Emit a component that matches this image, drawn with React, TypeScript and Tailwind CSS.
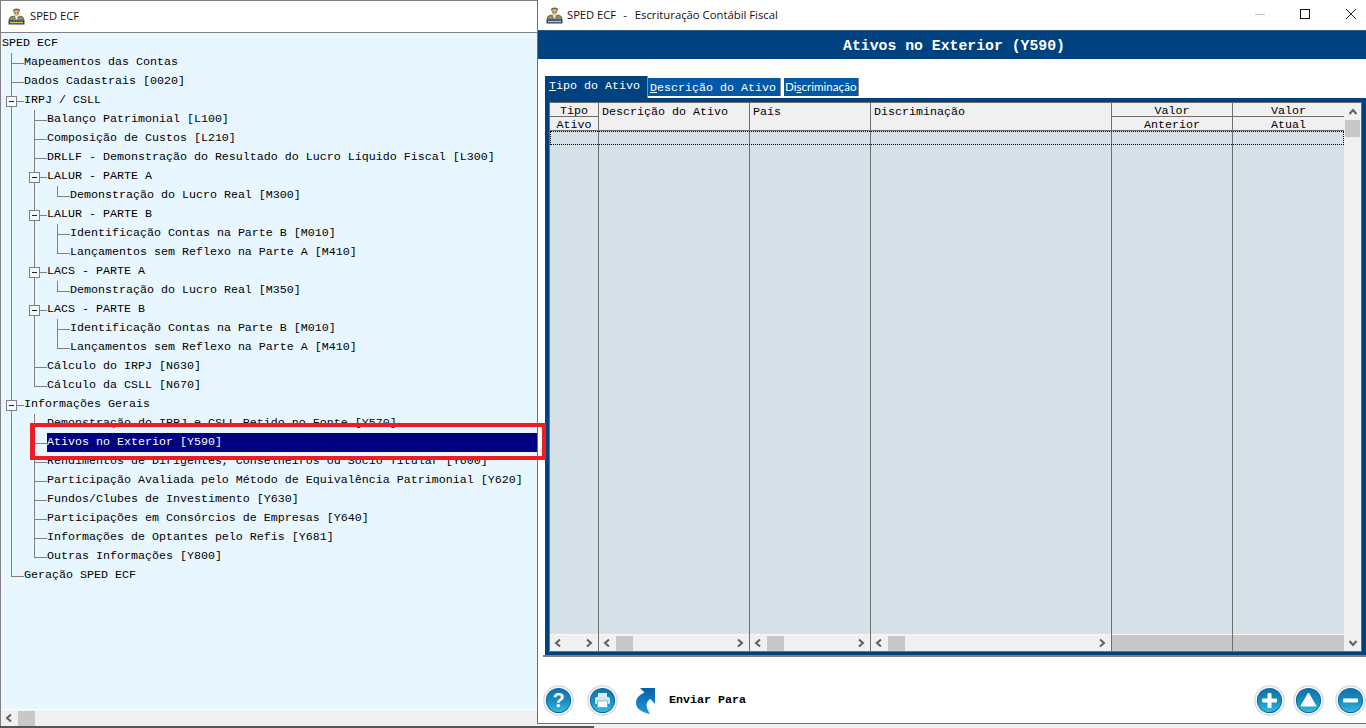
import React from "react";

type Kind = "root" | "tee" | "elbow" | "box";
type Row = { t: string; l: number; k: Kind; sel?: boolean };

const rows: Row[] = [
  { t: "SPED ECF", l: 0, k: "root" },
  { t: "Mapeamentos das Contas", l: 0, k: "tee" },
  { t: "Dados Cadastrais [0020]", l: 0, k: "tee" },
  { t: "IRPJ / CSLL", l: 0, k: "box" },
  { t: "Balanço Patrimonial [L100]", l: 1, k: "tee" },
  { t: "Composição de Custos [L210]", l: 1, k: "tee" },
  { t: "DRLLF - Demonstração do Resultado do Lucro Líquido Fiscal [L300]", l: 1, k: "tee" },
  { t: "LALUR - PARTE A", l: 1, k: "box" },
  { t: "Demonstração do Lucro Real [M300]", l: 2, k: "elbow" },
  { t: "LALUR - PARTE B", l: 1, k: "box" },
  { t: "Identificação Contas na Parte B [M010]", l: 2, k: "tee" },
  { t: "Lançamentos sem Reflexo na Parte A [M410]", l: 2, k: "elbow" },
  { t: "LACS - PARTE A", l: 1, k: "box" },
  { t: "Demonstração do Lucro Real [M350]", l: 2, k: "elbow" },
  { t: "LACS - PARTE B", l: 1, k: "box" },
  { t: "Identificação Contas na Parte B [M010]", l: 2, k: "tee" },
  { t: "Lançamentos sem Reflexo na Parte A [M410]", l: 2, k: "elbow" },
  { t: "Cálculo do IRPJ [N630]", l: 1, k: "tee" },
  { t: "Cálculo da CSLL [N670]", l: 1, k: "elbow" },
  { t: "Informações Gerais", l: 0, k: "box" },
  { t: "Demonstração do IRPJ e CSLL Retido no Fonte [Y570]", l: 1, k: "tee" },
  { t: "Ativos no Exterior [Y590]", l: 1, k: "tee", sel: true },
  { t: "Rendimentos de Dirigentes, Conselheiros ou Sócio Titular [Y600]", l: 1, k: "tee" },
  { t: "Participação Avaliada pelo Método de Equivalência Patrimonial [Y620]", l: 1, k: "tee" },
  { t: "Fundos/Clubes de Investimento [Y630]", l: 1, k: "tee" },
  { t: "Participações em Consórcios de Empresas [Y640]", l: 1, k: "tee" },
  { t: "Informações de Optantes pelo Refis [Y681]", l: 1, k: "tee" },
  { t: "Outras Informações [Y800]", l: 1, k: "elbow" },
  { t: "Geração SPED ECF", l: 0, k: "elbow" },
];

const GUIDE = "#808080";

function Connector({ l, k }: { l: number; k: Kind }) {
  const gx = [10, 33, 56][l];
  const w = gx + 13;
  return (
    <svg width={w} height={19} className="shrink-0 block" shapeRendering="crispEdges">
      {l >= 1 && <rect x={10} y={0} width={1} height={19} fill={GUIDE} />}
      {l >= 2 && <rect x={33} y={0} width={1} height={19} fill={GUIDE} />}
      {k === "tee" && <rect x={gx} y={0} width={1} height={19} fill={GUIDE} />}
      {k === "elbow" && <rect x={gx} y={0} width={1} height={10} fill={GUIDE} />}
      {k === "box" ? (
        <>
          <rect x={gx} y={0} width={1} height={19} fill={GUIDE} />
          <rect x={gx + 5} y={10} width={8} height={1} fill={GUIDE} />
          <rect x={gx - 4.5} y={5.5} width={10} height={10} fill="#f4fbff" stroke={GUIDE} />
          <rect x={gx - 2} y={10} width={5} height={1} fill="#222222" />
        </>
      ) : (
        <rect x={gx} y={10} width={13} height={1} fill={GUIDE} />
      )}
    </svg>
  );
}

function TreeRow({ r }: { r: Row }) {
  if (r.k === "root") {
    return <div className="h-[19px] pl-px flex items-center leading-none">{r.t}</div>;
  }
  return (
    <div className="h-[19px] flex items-center leading-none">
      <Connector l={r.l} k={r.k} />
      {r.sel ? (
        <div className="flex-1 h-[19px] bg-[#000080] text-white flex items-center">{r.t}</div>
      ) : (
        <div className="whitespace-nowrap">{r.t}</div>
      )}
    </div>
  );
}

function AppIcon() {
  return (
    <svg width={17} height={17} viewBox="0 0 17 17" className="shrink-0">
      <ellipse cx={8.5} cy={2.6} rx={3.4} ry={2.2} fill="#6b6a55" />
      <ellipse cx={8.5} cy={5} rx={2.8} ry={2.9} fill="#d3b48a" />
      <rect x={6.5} y={4.5} width={1.2} height={1} fill="#3a3020" />
      <rect x={9.4} y={4.5} width={1.2} height={1} fill="#3a3020" />
      <path d="M1 12 Q1 8.5 5 8 L8.5 9.5 L12 8 Q16 8.5 16 12 L16 13 L1 13 Z" fill="#8d8a6e" stroke="#3c3a2a" strokeWidth={0.6} />
      <path d="M7 8.5 L8.5 12 L10 8.5 Z" fill="#f4f0d8" />
      <rect x={0.5} y={12.5} width={16} height={4} fill="#2b3f8f" />
      <rect x={2} y={13.8} width={13} height={1.4} fill="#e7c62a" />
    </svg>
  );
}

function Chevron({ d }: { d: "l" | "r" | "u" | "d" }) {
  const p = {
    l: "M7 1.5 L3 5 L7 8.5",
    r: "M3 1.5 L7 5 L3 8.5",
    u: "M1.5 7 L5 3 L8.5 7",
    d: "M1.5 3 L5 7 L8.5 3",
  }[d];
  return (
    <svg width={10} height={10} viewBox="0 0 10 10" className="shrink-0 block">
      <path d={p} fill="none" stroke="#606060" strokeWidth={2} />
    </svg>
  );
}

function HScroll({ thumb }: { thumb: boolean }) {
  return (
    <div className="h-[16px] bg-[#f0f0f0] flex items-center pl-[3px] pr-[4px]">
      <Chevron d="l" />
      {thumb && <div className="ml-[4px] w-[17px] h-[15px] bg-[#c8c8c8]" />}
      <div className="flex-1" />
      <Chevron d="r" />
    </div>
  );
}

function Column({
  w,
  top,
  sub,
  scroll,
}: {
  w: string;
  top: string;
  sub?: string;
  scroll: "thumb" | "plain" | "none";
}) {
  return (
    <div className={`${w} flex flex-col border-l border-[#6f6f6f]`}>
      {sub !== undefined ? (
        <>
          <div className="h-[14px] border-b border-[#6f6f6f] bg-[#f0f0f0] flex justify-center pt-[3px] leading-[11px]">
            {top}
          </div>
          <div className="h-[14px] border-b border-[#6f6f6f] bg-[#f0f0f0] flex justify-center pt-[3px] leading-[11px]">
            {sub}
          </div>
        </>
      ) : (
        <div className="h-[28px] border-b border-[#6f6f6f] bg-[#f0f0f0] pl-[3px] pt-[3px] leading-[13px]">{top}</div>
      )}
      <div className="flex-1 bg-[#d6e1e7]" />
      <div className="h-px bg-[#f7f7f7]" />
      {scroll === "none" ? (
        <div className="h-[16px] bg-[#c8c8c8]" />
      ) : (
        <HScroll thumb={scroll === "thumb"} />
      )}
    </div>
  );
}

function Round({ id, children }: { id: string; children: React.ReactNode }) {
  return (
    <svg width={31} height={31} viewBox="0 0 31 31" className="shrink-0 block">
      <defs>
        <linearGradient id={id} x1="0" y1="0" x2="0" y2="1">
          <stop offset="0" stopColor="#1273ac" />
          <stop offset="0.55" stopColor="#1a8fc2" />
          <stop offset="1" stopColor="#36bcdc" />
        </linearGradient>
      </defs>
      <circle cx={15.5} cy={15.5} r={15.3} fill="#d4d8dc" />
      <circle cx={15.5} cy={15.5} r={14} fill="#f6f8f9" />
      <circle cx={15.5} cy={15.5} r={12.6} fill="#0d6a9e" />
      <circle cx={15.5} cy={15.5} r={11.6} fill={`url(#${id})`} />
      {children}
    </svg>
  );
}

export default function App() {
  const mono = "[font-family:'Liberation_Mono','Courier_New',monospace]";
  const sans = "[font-family:'Open_Sans','Noto_Sans',sans-serif]";
  return (
    <div className={`relative w-[1366px] h-[728px] overflow-hidden bg-[#f0f0f0] ${mono} text-[11.67px] text-black`}>
      {/* Left window */}
      <div className="absolute left-0 top-0 w-[538px] h-[728px] flex flex-col border-l border-[#808080]">
        <div className="h-px bg-[#808080] -ml-px" />
        <div className="h-[32px] bg-white flex items-center pl-[7px] border-b border-[#808080]">
          <AppIcon />
          <span className={`ml-[5px] text-[11.2px] text-[#111] ${sans}`}>SPED ECF</span>
        </div>
        <div className="flex-1 bg-[#e8f7ff] overflow-hidden pt-px">
          {rows.map((r, i) => (
            <TreeRow key={i} r={r} />
          ))}
        </div>
        <div className="h-px bg-white" />
        <div className="h-[16px] bg-[#f0f0f0] flex items-center pl-[3px]">
          <Chevron d="l" />
          <div className="ml-[4px] w-[17px] h-[15px] bg-[#c8c8c8]" />
        </div>
        <div className="h-[2px] bg-[#555555] -ml-px" />
      </div>

      {/* Right window */}
      <div className="absolute left-[537px] top-0 w-[829px] h-[724px] bg-white flex flex-col border-l border-b border-[#707070]">
        <div className="h-[30px] shrink-0 flex items-center pl-[8px]">
          <AppIcon />
          <span className={`ml-[4px] text-[11.2px] text-[#111] ${sans}`}>SPED ECF</span>
          <span className={`ml-[7px] text-[11.2px] text-[#111] ${sans}`}>-</span>
          <span className={`ml-[8px] text-[11.3px] text-[#111] ${sans}`}>Escrituração Contábil Fiscal</span>
          <div className="flex-1" />
          <svg width={112} height={30} viewBox="0 0 112 30" className="shrink-0" shapeRendering="crispEdges">
            <rect x={1} y={14} width={10} height={1} fill="#c4c4c4" />
            <rect x={46.5} y={9.5} width={9} height={9} fill="none" stroke="#111" />
            <path d="M92 9 L102 19 M102 9 L92 19" stroke="#222" fill="none" shapeRendering="auto" />
          </svg>
        </div>
        <div className="h-[29px] shrink-0 bg-[#00427f] border-t border-[#33597f] flex items-center justify-center pl-[4px] pt-[2px] text-white font-bold text-[14.8px] leading-none">
          Ativos no Exterior (Y590)
        </div>
        <div className="h-[17px] shrink-0" />

        <div className="h-[22px] shrink-0 flex items-start pl-[7px]">
          <div className="w-[103px] h-[22px] bg-[#00427f] border-r border-[#8a8a8a] text-white pl-[4px] pt-[4px] leading-[13px]">
            <u>T</u>ipo do Ativo
          </div>
          <div className="mt-[2px] w-[133px] h-[18px] bg-[#0058a8] border-r border-[#8a8a8a] text-white pl-[2px] flex items-center">
            <span className="mt-[4px]">
              <u>D</u>escrição do Ativo
            </span>
          </div>
          <div className="ml-[3px] mt-[2px] w-[75px] h-[18px] bg-[#0058a8] border-r border-[#8a8a8a] text-white pl-[1px] flex items-center text-[11.6px] [font-family:'Lato','Open_Sans',sans-serif]">
            <span>
              Di<u>s</u>criminação
            </span>
          </div>
        </div>

        <div className="h-[557px] shrink-0 ml-[7px] bg-[#00427f] pl-[4px] pr-[4px] pt-[4px] pb-[3px]">
          <div className="relative h-[550px] flex border-t border-r border-b border-[#6f6f6f]">
            <Column w="w-[49px]" top="Tipo" sub="Ativo" scroll="plain" />
            <Column w="w-[151px]" top="Descrição do Ativo" scroll="thumb" />
            <Column w="w-[121px]" top="País" scroll="thumb" />
            <Column w="w-[241px]" top="Discriminação" scroll="thumb" />
            <Column w="w-[121px]" top="Valor" sub="Anterior" scroll="none" />
            <Column w="w-[112px]" top="Valor" sub="Atual" scroll="none" />
            <div className="flex-1 bg-[#f0f0f0] flex flex-col items-center pt-[4px] pb-[3px]">
              <Chevron d="u" />
              <div className="mt-[3px] w-[15px] h-[17px] bg-[#c8c8c8]" />
              <div className="flex-1" />
              <Chevron d="d" />
            </div>
            <div className="absolute left-[1px] top-[28px] w-[794px] h-[14px] border border-dotted border-black" />
          </div>
        </div>

        <div className="h-[2px] shrink-0 ml-[5px] bg-[#808080]" />

        <div className="flex-1 flex items-center pt-[21px] pl-[5px]">
          <Round id="g1">
            <text x={15.5} y={22} textAnchor="middle" fontSize={20} fontWeight={700} fill="#ffffff" className="[font-family:'Liberation_Sans',sans-serif]">?</text>
          </Round>
          <div className="ml-[13px]">
            <Round id="g2">
              <rect x={11} y={8} width={9} height={4} fill="#dfeef5" />
              <rect x={8} y={12} width={15} height={7} rx={1.5} fill="#cfe6f0" />
              <rect x={10.5} y={16} width={10} height={6.5} fill="#ffffff" stroke="#5aa4c6" strokeWidth={0.7} />
            </Round>
          </div>
          <svg width={39} height={40} viewBox="0 0 39 40" className="ml-[12px] shrink-0 block">
            <defs>
              <linearGradient id="ga" x1="0" y1="0" x2="0" y2="1">
                <stop offset="0" stopColor="#0a5ea4" />
                <stop offset="1" stopColor="#1b9ada" />
              </linearGradient>
            </defs>
            <path d="M10 7 L25 7 L25 23 L20.5 18 Q13 22 20 33 Q6 30 6 22 Q6 15 14.5 11.5 Z" fill="url(#ga)" />
          </svg>
          <span className="font-bold leading-none mt-px">Enviar Para</span>
          <div className="flex-1" />
          <Round id="g3">
            <rect x={13.5} y={8} width={4} height={15} rx={1} fill="#fff" />
            <rect x={8} y={13.5} width={15} height={4} rx={1} fill="#fff" />
          </Round>
          <div className="ml-[8px]">
            <Round id="g4">
              <path d="M15.5 8 L23 21 L8 21 Z" fill="#fff" stroke="#fff" strokeLinejoin="round" />
            </Round>
          </div>
          <div className="ml-[11px]">
            <Round id="g5">
              <rect x={8} y={13.5} width={15} height={4} rx={1} fill="#fff" />
            </Round>
          </div>
        </div>
      </div>

      {/* Window shadow along the bottom edge */}
      <div className="absolute left-[537px] bottom-0 w-[57px] h-[2px] bg-[#555555]" />

      {/* Red highlight annotation */}
      <div className="absolute left-[30px] top-[423px] w-[516px] h-[37px] border-[4px] border-l-[5px] border-[#ee1c25]" />
    </div>
  );
}
